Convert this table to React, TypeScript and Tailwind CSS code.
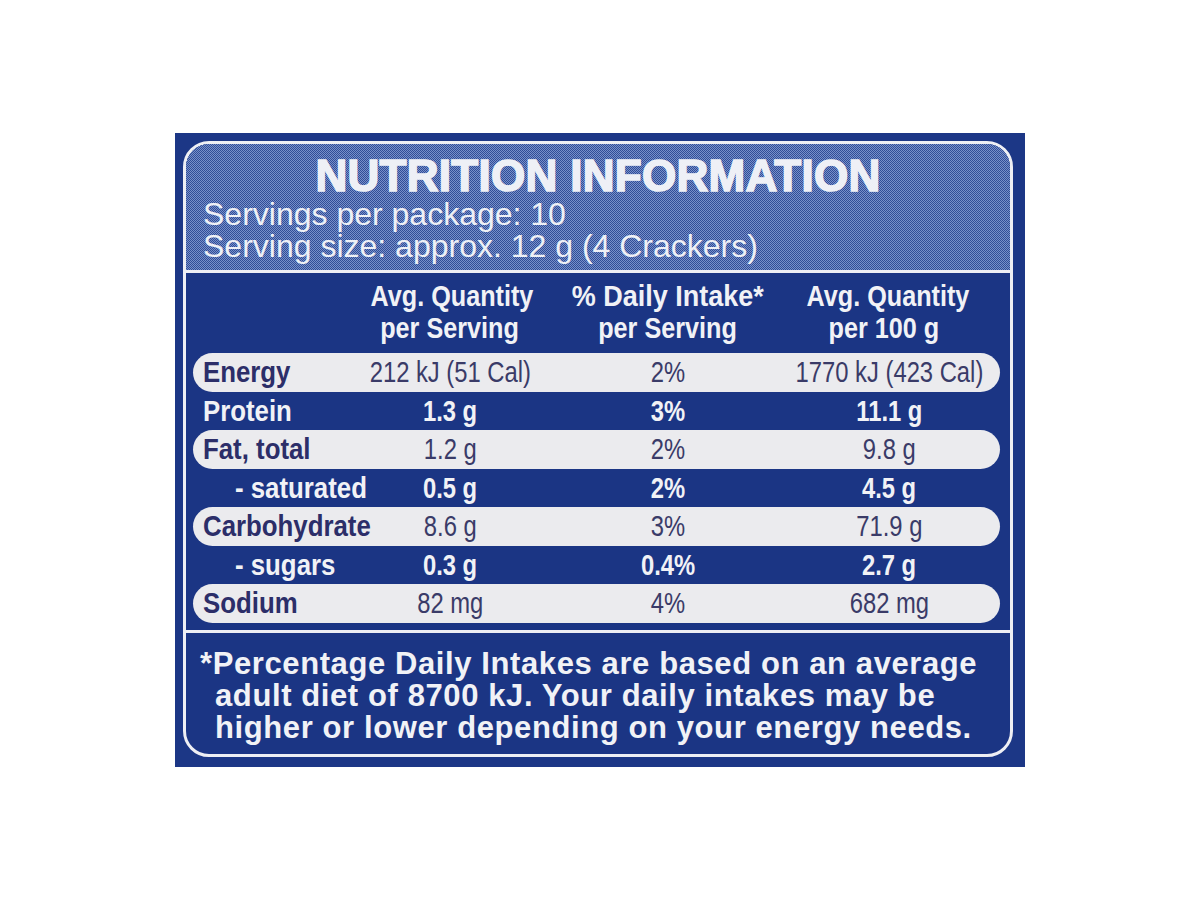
import React from "react";

type Row = { label: string; a: string; b: string; c: string; pill: boolean; indent?: boolean };

const rows: Row[] = [
  { label: "Energy", a: "212 kJ (51 Cal)", b: "2%", c: "1770 kJ (423 Cal)", pill: true },
  { label: "Protein", a: "1.3 g", b: "3%", c: "11.1 g", pill: false },
  { label: "Fat, total", a: "1.2 g", b: "2%", c: "9.8 g", pill: true },
  { label: "- saturated", a: "0.5 g", b: "2%", c: "4.5 g", pill: false, indent: true },
  { label: "Carbohydrate", a: "8.6 g", b: "3%", c: "71.9 g", pill: true },
  { label: "- sugars", a: "0.3 g", b: "0.4%", c: "2.7 g", pill: false, indent: true },
  { label: "Sodium", a: "82 mg", b: "4%", c: "682 mg", pill: true },
];

function Cond({ children, left }: { children: React.ReactNode; left?: boolean }) {
  return (
    <span
      className={
        "inline-block whitespace-nowrap scale-x-[0.84] " + (left ? "origin-left" : "origin-center")
      }
    >
      {children}
    </span>
  );
}

function Val({ v, pill }: { v: string; pill: boolean }) {
  return (
    <div
      className={
        "flex justify-center text-[29px] leading-[32px] whitespace-nowrap min-w-0 " +
        (pill ? "text-[#3a3b68] font-normal" : "font-bold")
      }
    >
      <span className="inline-block shrink-0 whitespace-nowrap scale-x-[0.82]">{v}</span>
    </div>
  );
}

export default function App() {
  return (
    <div className="w-[1200px] min-h-[900px] bg-white pt-[133px] pl-[175px] font-['Liberation_Sans',Arial,sans-serif]">
      <div className="w-[850px] h-[634px] bg-[#1c3786] pt-[8px] pl-[8px] pr-[12px] pb-[10px]">
        <div className="h-full border-[3px] border-[#eeeff4] rounded-[26px] overflow-hidden flex flex-col bg-[#1b3584]">
          {/* Header */}
          <div className="h-[126px] shrink-0 bg-[#4a67a8] bg-[repeating-conic-gradient(#7890ca_0_25%,#304d97_0_50%)] bg-[length:2px_2px] pt-[10px] pl-[17px] text-[#eef0f6]">
            <div className="text-center text-[44px] leading-[44px] font-bold tracking-[0.3px] [-webkit-text-stroke:1.6px_#eef0f6] pr-[17px]">
              NUTRITION INFORMATION
            </div>
            <div className="text-[32px] leading-[32px] whitespace-nowrap">Servings per package: 10</div>
            <div className="text-[32px] leading-[32px] whitespace-nowrap">Serving size: approx. 12 g (4 Crackers)</div>
          </div>
          <div className="h-[3px] shrink-0 bg-[#eeeff4]" />
          {/* Table */}
          <div className="h-[357px] shrink-0 pt-[7px] pl-[7px] pr-[10px]">
            <div className="grid grid-cols-[162px_190px_246px_196px_1fr] text-[#f1f2f6] font-bold text-[30px] leading-[32px] h-[64px]">
              <div />
              <div className="text-center">
                <div><Cond>Avg. Quantity</Cond></div>
                <div><Cond>per Serving</Cond></div>
              </div>
              <div className="text-center">
                <div><span className="inline-block whitespace-nowrap scale-x-[0.9]">% Daily Intake*</span></div>
                <div><Cond>per Serving</Cond></div>
              </div>
              <div className="text-center pr-[10px]">
                <div><Cond>Avg. Quantity</Cond></div>
                <div><Cond>per 100 g</Cond></div>
              </div>
              <div />
            </div>
            <div className="mt-[9px] flex flex-col">
              {rows.map((r) => (
                <div
                  key={r.label}
                  className={
                    r.pill
                      ? "grid grid-cols-[162px_190px_246px_196px_1fr] items-center h-[38.5px] rounded-full bg-[#ebebee] text-[#2c2e69]"
                      : "grid grid-cols-[162px_190px_246px_196px_1fr] items-center h-[38.5px] text-[#f1f2f6]"
                  }
                >
                  <div
                    className={
                      (r.indent ? "pl-[42px] " : "pl-[10px] ") +
                      "font-bold text-[30px] leading-[32px] whitespace-nowrap"
                    }
                  >
                    <span className="inline-block whitespace-nowrap scale-x-[0.86] origin-left">{r.label}</span>
                  </div>
                  <Val v={r.a} pill={r.pill} />
                  <Val v={r.b} pill={r.pill} />
                  <Val v={r.c} pill={r.pill} />
                  <div />
                </div>
              ))}
            </div>
          </div>
          <div className="h-[3px] shrink-0 bg-[#eeeff4]" />
          {/* Footnote */}
          <div className="flex-1 pt-[15px] text-[#f1f2f6] font-bold text-[31px] leading-[32px] tracking-[0.6px] whitespace-nowrap">
            <div className="pl-[14px]">*Percentage Daily Intakes are based on an average</div>
            <div className="pl-[29px]">adult diet of 8700 kJ. Your daily intakes may be</div>
            <div className="pl-[29px]">higher or lower depending on your energy needs.</div>
          </div>
        </div>
      </div>
    </div>
  );
}
